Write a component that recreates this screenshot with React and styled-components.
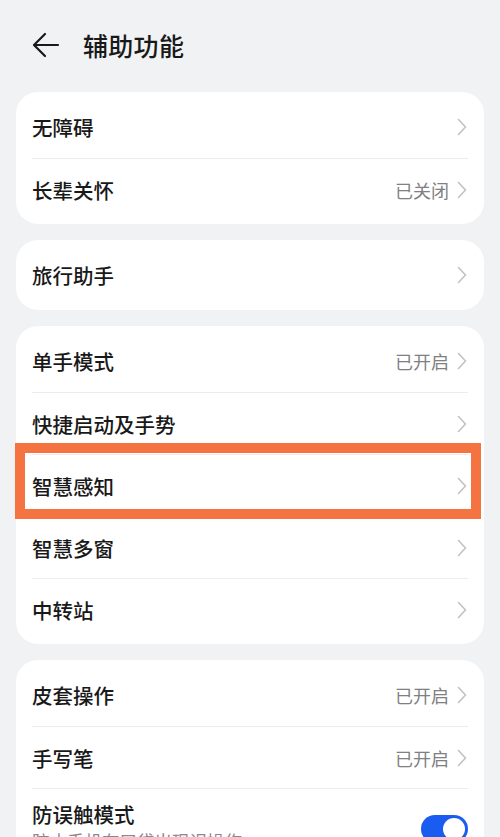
import React from 'react';
import styled, { createGlobalStyle } from 'styled-components';

const GlobalStyle = createGlobalStyle`
    html, body {
        margin : 0;
        padding : 0;
        background : #f1f2f4;
        font-family : "Noto Sans CJK SC", "Noto Sans", sans-serif;
        color : #191919;
    }
`;

const Back = () => (
    <svg width="28" height="26" viewBox="0 0 28 26" fill="none">
        <path d="M26 13H3M13 2L2 13l11 11" stroke="#191919" strokeWidth="2.2" strokeLinecap="round" strokeLinejoin="round" />
    </svg>
);

const Chevron = () => (
    <svg width="10" height="18" viewBox="0 0 10 18" fill="none">
        <path d="M1.5 1.5L8.5 9l-7 7.5" stroke="#c2c2c4" strokeWidth="1.6" strokeLinecap="round" strokeLinejoin="round" />
    </svg>
);

const groups = [
    [
        { title: '无障碍' },
        { title: '长辈关怀', value: '已关闭' },
    ],
    [
        { title: '旅行助手' },
    ],
    [
        { title: '单手模式', value: '已开启' },
        { title: '快捷启动及手势' },
        { title: '智慧感知', marked: true },
        { title: '智慧多窗' },
        { title: '中转站' },
    ],
    [
        { title: '皮套操作', value: '已开启' },
        { title: '手写笔', value: '已开启' },
        { title: '防误触模式', sub: '防止手机在口袋出现误操作', toggle: true },
    ],
];

const App = () => {
    return (
        <Page>
            <GlobalStyle />
            <Header>
                <BackButton><Back /></BackButton>
                <Title>辅助功能</Title>
            </Header>
            <List>
                {groups.map((group, gi) => (
                    <Card key={gi}>
                        {group.map((item, i) => (
                            <Row key={i} $first={i === 0} $tall={!!item.sub}>
                                <Label $tall={!!item.sub}>
                                    <RowTitle>{item.title}</RowTitle>
                                    {item.sub && <Sub>{item.sub}</Sub>}
                                </Label>
                                {item.toggle ? (
                                    <Toggle><Knob /></Toggle>
                                ) : (
                                    <Right>
                                        {item.value && <Value>{item.value}</Value>}
                                        <Chevron />
                                    </Right>
                                )}
                                {item.marked && <Mark />}
                            </Row>
                        ))}
                    </Card>
                ))}
            </List>
        </Page>
    );
};

export default App;

const Page = styled.div`
    width : 500px;
    min-height : 837px;
    background : #f1f2f4;
`;

const Header = styled.div`
    display : flex;
    align-items : center;
    height : 90px;
    padding : 0 0 0 32px;
    box-sizing : border-box;
`;

const BackButton = styled.div`
    display : flex;
    align-items : center;
    width : 28px;
    height : 26px;
    margin-right : 23px;
`;

const Title = styled.div`
    font-size : 25px;
    font-weight : 500;
    letter-spacing : 0.3px;
`;

const List = styled.div`
    display : flex;
    flex-direction : column;
    gap : 16px;
    padding : 2px 16px 0;
`;

const Card = styled.div`
    position : relative;
    background : #ffffff;
    border-radius : 22px;
    padding : 4px 16px;
`;

const Row = styled.div`
    position : relative;
    display : flex;
    align-items : center;
    justify-content : space-between;
    height : ${p => p.$tall ? '80px' : '62px'};
    border-top : ${p => p.$first ? 'none' : '1px solid #ececee'};
    box-sizing : border-box;
`;

const Label = styled.div`
    display : flex;
    flex-direction : column;
    justify-content : center;
    margin-top : ${p => p.$tall ? '-3px' : '0'};
`;

const RowTitle = styled.div`
    font-size : 20.5px;
    font-weight : 500;
    line-height : 28px;
`;

const Sub = styled.div`
    font-size : 17.5px;
    color : #8a8a8c;
    line-height : 26px;
`;

const Right = styled.div`
    display : flex;
    align-items : center;
    gap : 8px;
    margin-right : 1px;
`;

const Value = styled.div`
    font-size : 18px;
    color : #808082;
`;

const Toggle = styled.div`
    position : relative;
    width : 47px;
    height : 28px;
    border-radius : 14px;
    background : #1a5cf0;
`;

const Knob = styled.div`
    position : absolute;
    top : 3px;
    right : 3px;
    width : 22px;
    height : 22px;
    border-radius : 50%;
    background : #ffffff;
`;

const Mark = styled.div`
    position : absolute;
    z-index : 1;
    top : -12px;
    bottom : -3px;
    left : -17px;
    right : -13px;
    border : 10px solid #f57340;
    pointer-events : none;
`;
